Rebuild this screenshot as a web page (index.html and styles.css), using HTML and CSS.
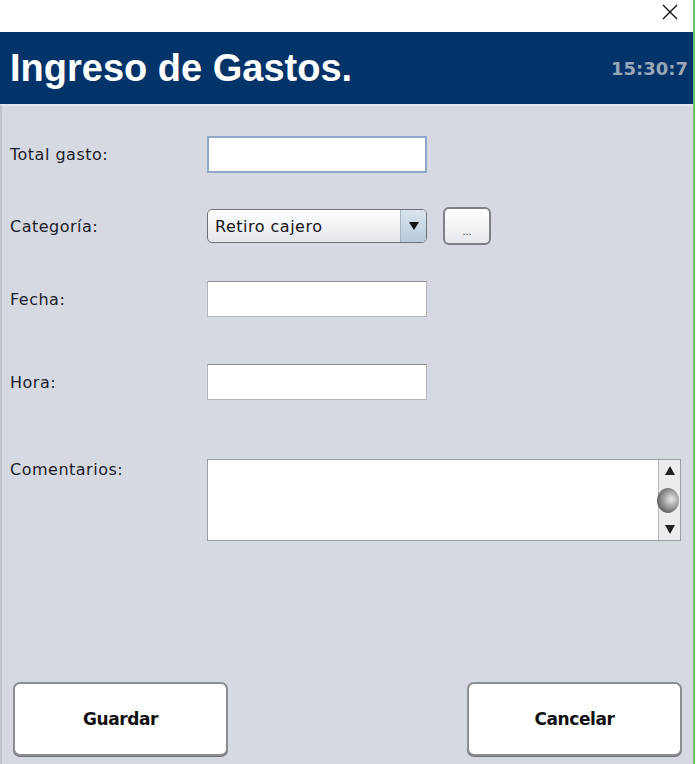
FILE: index.html
```html
<!DOCTYPE html>
<html lang="es">
<head>
<meta charset="utf-8">
<title>Ingreso de Gastos.</title>
<link rel="stylesheet" href="styles.css">
</head>
<body>
<div class="window">
  <div class="titlebar">
    <button class="close" aria-label="Cerrar">
      <svg width="16" height="16" viewBox="0 0 16 16"><path d="M1 1 L15 15 M15 1 L1 15" stroke="#111" stroke-width="1.4" fill="none"/></svg>
    </button>
  </div>
  <header class="header">
    <h1 class="title">Ingreso de Gastos.</h1>
    <span class="clock">15:30:7</span>
  </header>
  <main class="body">
    <div class="row row-total">
      <label class="label">Total gasto:</label>
      <div class="field field-focus"></div>
    </div>
    <div class="row row-cat">
      <label class="label">Categoría:</label>
      <div class="select">
        <span class="select-text">Retiro cajero</span>
        <span class="select-arrow"><svg width="10" height="8" viewBox="0 0 10 8"><path d="M0 0 L10 0 L5 8 Z" fill="#111"/></svg></span>
      </div>
      <button class="more">...</button>
    </div>
    <div class="row row-fecha">
      <label class="label">Fecha:</label>
      <div class="field"></div>
    </div>
    <div class="row row-hora">
      <label class="label">Hora:</label>
      <div class="field"></div>
    </div>
    <div class="row row-com">
      <label class="label label-top">Comentarios:</label>
      <div class="textarea">
        <div class="scrollbar">
          <svg width="10" height="9" viewBox="0 0 10 9"><path d="M0 9 L10 9 L5 0 Z" fill="#222"/></svg>
          <span class="thumb"></span>
          <svg width="10" height="9" viewBox="0 0 10 9"><path d="M0 0 L10 0 L5 9 Z" fill="#222"/></svg>
        </div>
      </div>
    </div>
    <div class="actions">
      <button class="action">Guardar</button>
      <button class="action">Cancelar</button>
    </div>
  </main>
</div>
</body>
</html>
```

FILE: styles.css
```css
html, body {
  margin: 0;
  padding: 0;
  background: #ffffff;
}

body {
  font-family: "DejaVu Sans", sans-serif;
  width: 699px;
  height: 764px;
  overflow: hidden;
}

.window {
  width: 693px;
  height: 764px;
  border-right: 2px solid #6cbf6c;
  display: flex;
  flex-direction: column;
}

.titlebar {
  height: 32px;
  background: #ffffff;
  display: flex;
  justify-content: flex-end;
  align-items: center;
}

.close {
  border: none;
  background: transparent;
  padding: 0;
  margin-right: 14px;
  margin-top: -8px;
  width: 18px;
  height: 18px;
  display: flex;
  align-items: center;
  justify-content: center;
}

.header {
  height: 72px;
  background: #023369;
  display: flex;
  align-items: center;
  justify-content: space-between;
  padding: 0 5px 0 10px;
}

.title {
  margin: 0;
  color: #ffffff;
  font-family: "Liberation Sans", Arial, sans-serif;
  font-weight: bold;
  font-size: 38px;
  line-height: 1;
}

.clock {
  color: #9ba6b8;
  font-family: "DejaVu Sans", sans-serif;
  font-weight: bold;
  font-size: 18px;
}

.body {
  flex: 1;
  background: #d6d9e1;
  border-left: 2px solid #bfc3cb;
  border-top: 2px solid #e2e6ee;
  display: flex;
  flex-direction: column;
  padding: 0 11px 0 8px;
}

.row {
  display: flex;
  align-items: center;
}

.row-total { margin-top: 30px; }
.row-cat { margin-top: 34px; }
.row-fecha { margin-top: 36px; }
.row-hora { margin-top: 47px; }
.row-com { margin-top: 59px; align-items: flex-start; }

.label {
  width: 197px;
  font-size: 16px;
  letter-spacing: 0.5px;
  color: #1d1d2b;
}

.label-top {
  padding-top: 1px;
}

.field {
  width: 218px;
  height: 34px;
  background: #ffffff;
  border: 1px solid #b4b6ba;
  border-top-color: #8e9096;
}

.field-focus {
  width: 216px;
  height: 33px;
  border: 2px solid #8fa8c8;
}

.select {
  width: 218px;
  height: 32px;
  border: 1px solid #6d7179;
  border-radius: 5px;
  background: linear-gradient(#ffffff, #e3e6ea);
  display: flex;
  align-items: center;
  overflow: hidden;
}

.select-text {
  flex: 1;
  padding-left: 7px;
  font-size: 16px;
  letter-spacing: 0.5px;
  color: #161616;
}

.select-arrow {
  width: 25px;
  height: 100%;
  border-left: 1px solid #a8b6c6;
  background: linear-gradient(#d9e4ef, #b8cadb);
  display: flex;
  align-items: center;
  justify-content: center;
}

.more {
  margin-left: 16px;
  width: 48px;
  height: 38px;
  border: 2px solid #7d8086;
  border-radius: 6px;
  background: linear-gradient(#ffffff, #e6e8ec);
  font-family: "Liberation Sans", Arial, sans-serif;
  font-size: 11px;
  color: #444;
  padding: 10px 0 0 0;
}

.textarea {
  width: 472px;
  height: 80px;
  background: #ffffff;
  border: 1px solid #9c9ea3;
  display: flex;
  justify-content: flex-end;
}

.scrollbar {
  width: 22px;
  height: 100%;
  border-left: 1px solid #b4b6ba;
  background: #ececee;
  display: flex;
  flex-direction: column;
  align-items: center;
  justify-content: space-between;
  padding: 6px 0 6px 0;
  box-sizing: border-box;
}

.thumb {
  width: 22px;
  height: 25px;
  margin-left: -4px;
  border-radius: 50%;
  background: radial-gradient(circle at 65% 45%, #e8e8e8 0%, #a0a0a0 40%, #2e2e2e 100%);
}

.actions {
  margin-top: auto;
  margin-bottom: 8px;
  display: flex;
  justify-content: space-between;
  padding-left: 3px;
}

.action {
  width: 215px;
  height: 74px;
  background: #ffffff;
  border: 2px solid #8b8e93;
  border-radius: 7px;
  box-shadow: 0 1px 0 #6f7277;
  font-family: "DejaVu Sans", sans-serif;
  font-weight: bold;
  font-size: 17px;
  letter-spacing: -0.4px;
  color: #111111;
}
```
